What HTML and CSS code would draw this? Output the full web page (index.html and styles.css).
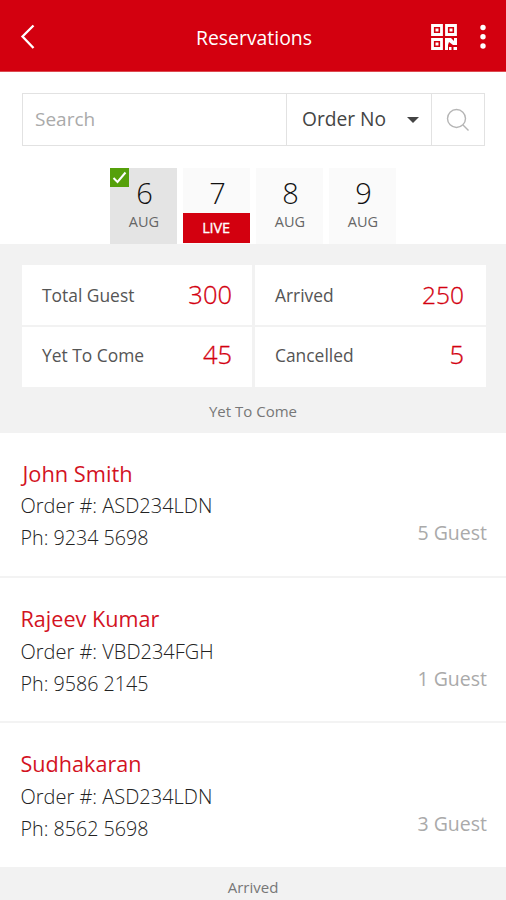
FILE: index.html
```html
<!DOCTYPE html>
<html lang="en">
<head>
<meta charset="utf-8">
<title>Reservations</title>
<link rel="stylesheet" href="styles.css">
</head>
<body>
<header class="bar">
  <svg class="back" width="16" height="26" viewBox="0 0 16 26"><path d="M13.500 1.500 2.500 12.500l11 11.500"/></svg>
  <h1>Reservations</h1>
  <svg class="qr" width="26" height="26" viewBox="0 0 26 26">
    <path class="qr-line" d="M1.500 1.500h9v9h-9zM15.500 1.500h9v9h-9zM1.500 15.500h9v9h-9z"/>
    <path class="qr-fill" d="M4.500 4.500h3v3h-3zM18.500 4.500h3v3h-3zM4.500 18.500h3v3h-3zM14 14h6l3 3V14h3v7h-4l-4-3-1 3v5h-3zM18 23h2.500v3H18zM22.500 23H26v3h-3.500z"/>
  </svg>
  <svg class="more" width="6" height="26" viewBox="0 0 6 26"><circle cx="3" cy="3.500" r="2.700"/><circle cx="3" cy="12.800" r="2.700"/><circle cx="3" cy="22" r="2.700"/></svg>
</header>
<div class="search">
  <span class="field">Search</span>
  <span class="select"><span>Order No</span><i class="caret"></i></span>
  <span class="go"><svg width="24" height="24" viewBox="0 0 24 24"><circle cx="10.500" cy="10.500" r="9"/><path d="m17 17 5.500 5.500"/></svg></span>
</div>
<nav class="dates">
  <div class="date chosen"><svg class="tick" width="19" height="19" viewBox="0 0 19 19"><path d="m3.500 10 4 4 8-9.500"/></svg><b>6</b><small>AUG</small></div>
  <div class="date live"><b>7</b><small>LIVE</small></div>
  <div class="date"><b>8</b><small>AUG</small></div>
  <div class="date"><b>9</b><small>AUG</small></div>
</nav>
<section class="summary">
  <div class="stats">
    <div class="stat"><span>Total Guest</span><b>300</b></div>
    <div class="stat"><span>Arrived</span><b>250</b></div>
    <div class="stat"><span>Yet To Come</span><b>45</b></div>
    <div class="stat"><span>Cancelled</span><b>5</b></div>
  </div>
  <h2>Yet To Come</h2>
</section>
<main>
  <article class="guest"><div><h3>John Smith</h3><p class="order">Order #: ASD234LDN</p><p class="phone">Ph: 9234 5698</p></div><span class="count">5 Guest</span></article>
  <article class="guest"><div><h3>Rajeev Kumar</h3><p class="order">Order #: VBD234FGH</p><p class="phone">Ph: 9586 2145</p></div><span class="count">1 Guest</span></article>
  <article class="guest"><div><h3>Sudhakaran</h3><p class="order">Order #: ASD234LDN</p><p class="phone">Ph: 8562 5698</p></div><span class="count">3 Guest</span></article>
</main>
<h2 class="arrived">Arrived</h2>
</body>
</html>
```
FILE: styles.css
```css
* { box-sizing: border-box; margin: 0; padding: 0; }
body { width: 506px; height: 900px; overflow: hidden; background: #fff; color: #222; font-family: "Open Sans", "Noto Sans", sans-serif; }
svg { display: block; fill: none; }
.bar { height: 72px; background: #d3000f; border-bottom: 1px solid #dc4a50; display: grid; grid-template-columns: 80px 1fr 26px 6px; column-gap: 22px; align-items: center; padding: 2px 21px 0 20px; }
.back { stroke: #fff; stroke-width: 2.3; }
h1 { color: #fff; font-size: 19.4px; font-weight: 400; line-height: 28px; padding: 2px 0 0 74px; }
.qr-line { stroke: #fff; stroke-width: 2.8; }
.qr-fill, .more { fill: #fff; }
.more { margin-left: .5px; }
.search { display: flex; height: 53px; margin: 21px 21px 0 22px; border: 1px solid #e2e2e2; font-size: 19px; line-height: 51px; }
.field { flex: 1; padding-left: 12px; color: #aaa; }
.select { width: 146px; border-left: 1px solid #e2e2e2; border-right: 1px solid #e2e2e2; padding: 0 12px 0 15px; display: flex; justify-content: space-between; align-items: center; color: #444; font-size: 19.2px; }
.select span { padding-bottom: 2px; }
.caret { border: 6px solid transparent; border-top-color: #444; border-bottom: 0; }
.go { width: 52px; display: grid; place-items: center; }
.go svg { stroke: #b5b5b5; stroke-width: 1.4; }
.dates { display: flex; gap: 6px; margin: 22px 0 0 110px; }
.date { position: relative; width: 67px; height: 76px; background: #fafafa; text-align: center; }
.date b { display: block; height: 45px; line-height: 50px; padding-left: 2px; font-size: 29px; font-weight: 300; color: #111; }
.date small { display: block; height: 31px; line-height: 17px; padding-left: 1px; font-size: 14.5px; color: #666; }
.chosen { background: #e4e4e4; }
.tick { position: absolute; left: 0; top: 0; background: #55a00a; stroke: #fff; stroke-width: 2; }
.date.live small { height: 30px; line-height: 30px; padding: 0 1px 0 0; background: #d3000f; color: #fff; letter-spacing: -.2px; -webkit-text-stroke: .3px #fff; }
.summary { background: #f2f2f2; height: 189px; padding: 21px 20px 0 22px; }
.stats { display: grid; grid-template-columns: 230px 1fr; grid-auto-rows: 60px; gap: 2px 3px; }
.stat { background: #fff; display: flex; justify-content: space-between; align-items: center; padding: 0 22px 1px 20px; font-size: 17.4px; color: #555; }
.stat:nth-child(odd) { padding-right: 20px; }
.stat:nth-child(n+3) { padding-bottom: 5px; }
.stat b { font-size: 25.5px; font-weight: 300; color: #d3000f; padding-bottom: 1px; -webkit-text-stroke: .3px #d3000f; }
.stat:nth-child(2) b { font-size: 24.5px; }
h2 { text-align: center; font-size: 15px; font-weight: 400; color: #777; line-height: 49px; }
.summary h2 { padding-right: 2px; }
.guest { display: flex; justify-content: space-between; height: 145px; padding: 24px 19px 0 20.5px; border-bottom: 2px solid #f3f3f3; font-size: 20px; font-weight: 300; }
.guest:last-child { height: 144px; border: 0; }
.guest h3 { font-size: 21.6px; font-weight: 400; line-height: 33px; color: #d3131f; }
.guest:first-child h3 { padding-left: 2px; font-size: 21.8px; }
.guest p { line-height: 31.5px; }
.guest + .guest .order, .guest + .guest .phone, .guest + .guest .count { position: relative; top: 1px; }
.guest .phone { font-size: 19.7px; }
.count { color: #aaa; font-size: 19.5px; font-weight: 400; line-height: 40px; padding-top: 56px; }
.arrived { background: #f2f2f2; height: 33px; line-height: 41px; }
```
